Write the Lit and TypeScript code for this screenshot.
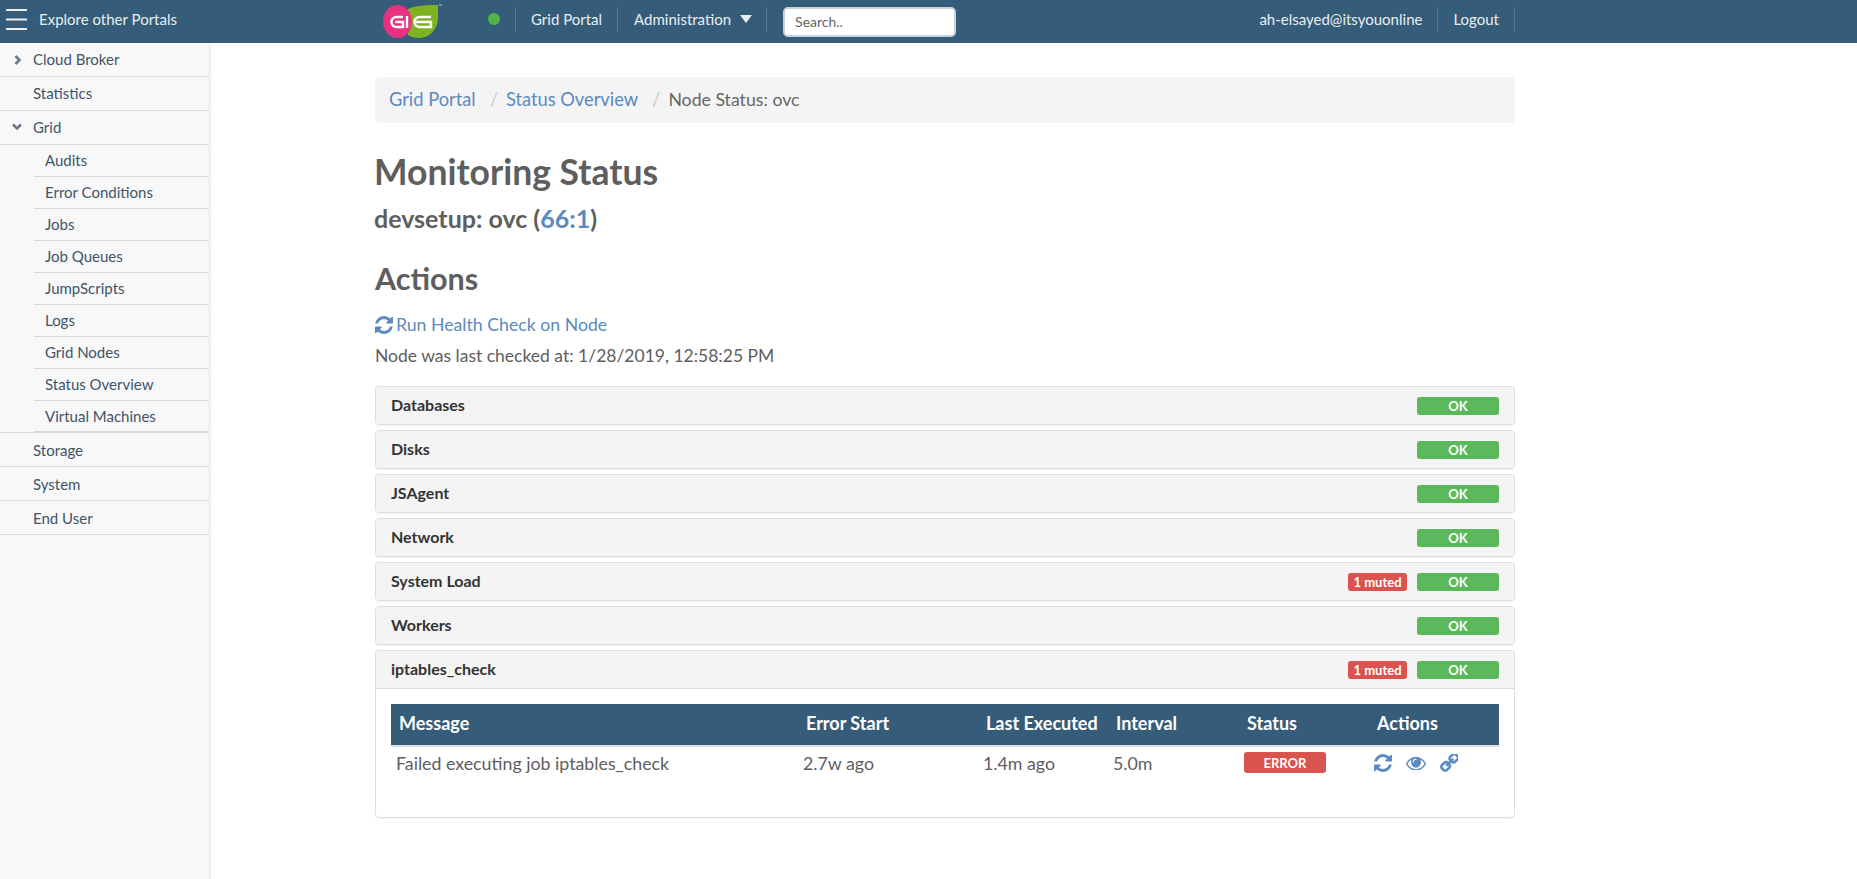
import { LitElement, html, css, svg } from 'lit';
import { customElement } from 'lit/decorators.js';

const refreshIcon = svg`<svg width="18" height="18" viewBox="0 128 1536 1536" fill="currentColor"><path d="M1511 1056q0 5-1 7-64 268-268 434.500t-478 166.500q-146 0-282.500-55t-243.500-157l-129 129q-19 19-45 19t-45-19-19-45v-448q0-26 19-45t45-19h448q26 0 45 19t19 45-19 45l-137 137q71 66 161 102t187 36q134 0 250-65t186-179q11-17 53-117 8-23 30-23h192q13 0 22.500 9.500t9.500 22.500zm25-800v448q0 26-19 45t-45 19h-448q-26 0-45-19t-19-45 19-45l138-138q-148-137-349-137-134 0-250 65t-186 179q-11 17-53 117-8 23-30 23h-199q-13 0-22.500-9.500t-9.500-22.500v-7q65-268 270-434.500t480-166.500q146 0 284 55.500t245 156.500l130-129q19-19 45-19t45 19 19 45z"/></svg>`;
const eyeIcon = svg`<svg width="20" height="14" viewBox="0 320 1792 1152" fill="currentColor" preserveAspectRatio="none"><path d="M1664 960q-152-236-381-353 61 104 61 225 0 185-131.500 316.500t-316.500 131.500-316.500-131.500-131.500-316.500q0-121 61-225-229 117-381 353 133 205 333.500 326.500t434.500 121.500 434.500-121.500 333.500-326.500zm-720-384q0-20-14-34t-34-14q-125 0-214.500 89.500t-89.500 214.500q0 20 14 34t34 14 34-14 14-34q0-86 61-147t147-61q20 0 34-14t14-34zm848 384q0 34-20 69-140 230-376.500 368.500t-499.500 138.500-499.500-139-376.500-368q-20-35-20-69t20-69q140-229 376.500-368t499.500-139 499.500 139 376.500 368q20 35 20 69z"/></svg>`;
const linkIcon = svg`<svg class="flip" width="18" height="18" viewBox="128 128 1536 1536" fill="currentColor" stroke="currentColor" stroke-width="40"><path d="M1456 1216q0-40-28-68l-208-208q-28-28-68-28-42 0-72 32 3 3 19 18.500t21.500 21.500 15 19 13 25.500 3.500 27.500q0 40-28 68t-68 28q-15 0-27.500-3.500t-25.500-13-19-15-21.500-21.500-18.500-19q-33 31-33 73 0 40 28 68l206 207q27 27 68 27 40 0 68-26l147-146q28-28 28-67zm-703-705q0-40-28-68l-206-207q-28-28-68-28-39 0-68 27l-147 146q-28 28-28 67 0 40 28 68l208 208q27 27 68 27 42 0 72-31-3-3-19-18.500t-21.500-21.500-15-19-13-25.500-3.500-27.500q0-40 28-68t68-28q15 0 27.500 3.500t25.500 13 19 15 21.500 21.500 18.500 19q33-31 33-73zm895 705q0 120-85 203l-147 146q-83 83-203 83-121 0-204-85l-206-207q-83-83-83-203 0-123 88-209l-88-88q-86 88-208 88-120 0-204-84l-208-208q-84-84-84-204t85-203l147-146q83-83 203-83 121 0 204 85l206 207q83 83 83 203 0 123-88 209l88 88q86-88 208-88 120 0 204 84l208 208q84 84 84 204z"/></svg>`;

const sidebarSub = ['Audits', 'Error Conditions', 'Jobs', 'Job Queues', 'JumpScripts', 'Logs', 'Grid Nodes', 'Status Overview', 'Virtual Machines'];
const panels = [
  { name: 'Databases' },
  { name: 'Disks' },
  { name: 'JSAgent' },
  { name: 'Network' },
  { name: 'System Load', muted: true },
  { name: 'Workers' },
];

@customElement('app-root')
export class AppRoot extends LitElement {
  static styles = css`
    :host {
      display: block;
      height: 879px;
      overflow: hidden;
      background: #fff;
      color: #5e5e5e;
      font-family: Lato, 'Open Sans', sans-serif;
      font-size: 16px;
    }
    a { color: #5c8ac0; text-decoration: none; }
    svg { display: block; }
    .flip { transform: scaleX(-1); }

    .navbar {
      display: flex;
      align-items: center;
      height: 43px;
      box-sizing: border-box;
      padding-bottom: 5px;
      background: #355c78;
      color: #e8eef2;
      font-size: 15px;
    }
    .brand {
      display: flex;
      align-items: center;
      width: 210px;
      flex: none;
    }
    .burger { margin: 0 12px 0 6px; flex: none; }
    .logo { margin: 3px 0 0 173px; flex: none; }
    .dot {
      width: 12px;
      height: 12px;
      border-radius: 50%;
      background: #4cb748;
      margin: 0 15px 0 46px;
      flex: none;
    }
    .nav-item {
      display: flex;
      align-items: center;
      height: 25px;
      border-left: 1px solid #5b7a90;
      padding: 0 15px;
      white-space: nowrap;
    }
    .nav-item.admin { padding: 0 14px 0 16px; }
    .nav-item.divider { padding: 0 16px 0 0; }
    .caret {
      width: 0;
      height: 0;
      border-left: 6px solid transparent;
      border-right: 6px solid transparent;
      border-top: 8px solid #e8eef2;
      margin-left: 9px;
    }
    .search {
      width: 173px;
      height: 30px;
      box-sizing: border-box;
      background: #fff;
      border: 2px solid #c8d2da;
      border-radius: 5px;
      margin-top: 5px;
      padding-left: 10px;
      display: flex;
      align-items: center;
      color: #666;
      font-size: 14px;
    }
    .spacer { flex: 1; }
    .right { display: flex; margin-right: 342px; }
    .right .nav-item { border-left: none; border-right: 1px solid #5b7a90; }

    .body { display: flex; height: 836px; }
    .sidebar {
      width: 210px;
      flex: none;
      box-sizing: border-box;
      background: #f8f8f8;
      border-right: 1px solid #ececec;
      box-shadow: 1px 0 2px rgba(0, 0, 0, 0.06);
      color: #3f5468;
      font-size: 15px;
    }
    .item {
      display: flex;
      align-items: center;
      height: 34px;
      box-sizing: border-box;
      border-bottom: 1px solid #d5dbe1;
      padding-left: 33px;
      position: relative;
    }
    .item.top { padding-bottom: 2px; }
    .chev { position: absolute; top: 12px; }
    .chev.right-c { left: 14px; }
    .chev.down-c { left: 12px; }
    .subs { border-bottom: 1px solid #d5dbe1; }
    .sub {
      display: flex;
      align-items: center;
      height: 32px;
      box-sizing: border-box;
      margin-left: 34px;
      border-bottom: 1px solid #d5dbe1;
      padding: 0 0 1px 11px;
    }
    .sub:last-child { height: 31px; padding-bottom: 0; }

    .main { flex: 1; padding: 34px 0 0 165px; min-width: 0; }
    .content { width: 1140px; }
    .crumb {
      display: flex;
      align-items: center;
      height: 46px;
      box-sizing: border-box;
      padding: 0 0 2px 14px;
      background: #f4f4f4;
      border-radius: 4px;
      font-size: 18.300px;
    }
    .crumb .sep { color: #ccc; padding: 0 8px 0 14px; }
    .crumb .now { color: #666; font-size: 17.700px; }
    h1 { font-size: 35.500px; font-weight: 700; margin: 29px 0 0 -1px; line-height: 40px; color: #5e5e5e; }
    h2 { font-size: 25px; font-weight: 700; margin: 11px 0 0 -1px; line-height: 30px; color: #5e5e5e; }
    h3 { font-size: 30.500px; font-weight: 700; margin: 27px 0 0; line-height: 36px; color: #5e5e5e; }
    .run { display: flex; align-items: center; gap: 3px; margin-top: 17px; font-size: 17.700px; line-height: 24px; }
    .checked { font-size: 17.500px; line-height: 24px; margin: 7px 0 18px; }

    .panel {
      border: 1px solid #ddd;
      border-radius: 4px;
      margin-bottom: 5px;
      box-shadow: 0 1px 1px rgba(0, 0, 0, 0.05);
    }
    .head {
      display: flex;
      align-items: center;
      height: 37px;
      background: #f4f4f4;
      padding: 0 15px;
      color: #333;
      font-size: 16px;
      font-weight: 700;
      border-radius: 3px;
    }
    .panel.open .head { border-bottom: 1px solid #ddd; border-radius: 3px 3px 0 0; }
    .head .name { flex: 1; margin-top: -2px; }
    .badge {
      display: flex;
      align-items: center;
      justify-content: center;
      height: 18px;
      border-radius: 3px;
      color: #fff;
      font-size: 13px;
      font-weight: 700;
    }
    .muted { width: 59px; background: #d9534f; margin-right: 10px; }
    .ok { width: 82px; background: #5cb85c; }

    .table-wrap { padding: 15px 15px 33px; }
    table { width: 1108px; border-collapse: collapse; table-layout: fixed; }
    .c1 { width: 407px; }
    .c2 { width: 180px; }
    .c3, .c5 { width: 130px; }
    .c4 { width: 131px; }
    th {
      background: #355c78;
      color: #fff;
      font-size: 18px;
      font-weight: 700;
      text-align: left;
      height: 42px;
      box-sizing: border-box;
      padding: 0 8px 3px;
      border-bottom: 2px solid #d8dee3;
    }
    td { font-size: 17.800px; padding: 0 5px 6px; height: 38px; box-sizing: border-box; color: #5e5e5e; }
    .err { width: 82px; height: 21px; background: #d9534f; }
    .acts { display: flex; gap: 14px; color: #5c8ac0; align-items: center; }
  `;

  render() {
    return html`
      <div class="navbar">
        <div class="brand">
          <svg class="burger" width="21" height="21" viewBox="0 0 21 21" fill="#e8eef2">
            <rect y="0" width="21" height="2"/><rect y="9.500" width="21" height="2"/><rect y="19" width="21" height="2"/>
          </svg>
          <span>Explore other Portals</span>
        </div>
        <svg class="logo" width="59" height="34" viewBox="0 0 59 34">
          <path d="M24 6C31 1 45 1 55 1V13C55 25 47 34 36 34c-4 0-8-1-11-3z" fill="#7eb221"/>
          <rect x="56" y="0" width="3" height="2" fill="#7b9a6a"/>
          <ellipse cx="14.500" cy="17.500" rx="14.500" ry="16.500" fill="#e6327f"/>
          <g fill="none" stroke="#fff" stroke-width="2.400">
            <path d="M20 13h-6.500a5 5 0 0 0 0 10H20v-5h-8"/>
            <path d="M24 12v12"/>
            <path d="M48 13H36.500a5 5 0 0 0 0 10H48v-5H33"/>
          </g>
        </svg>
        <div class="dot"></div>
        <div class="nav-item">Grid Portal</div>
        <div class="nav-item admin">Administration<span class="caret"></span></div>
        <div class="nav-item divider"></div>
        <div class="search">Search..</div>
        <div class="spacer"></div>
        <div class="right">
          <div class="nav-item">ah-elsayed@itsyouonline</div>
          <div class="nav-item">Logout</div>
        </div>
      </div>
      <div class="body">
        <div class="sidebar">
          <div class="item top">
            <svg class="chev right-c" width="8" height="10" viewBox="0 0 8 10" fill="none" stroke="#6a7a8a" stroke-width="2.600"><path d="M1.500 1l4 4-4 4"/></svg>
            Cloud Broker
          </div>
          <div class="item top">Statistics</div>
          <div class="item top">
            <svg class="chev down-c" width="10" height="8" viewBox="0 0 10 8" fill="none" stroke="#6a7a8a" stroke-width="2.600"><path d="M1 1.500l4 4 4-4"/></svg>
            Grid
          </div>
          <div class="subs">
            ${sidebarSub.map((s) => html`<div class="sub">${s}</div>`)}
          </div>
          <div class="item">Storage</div>
          <div class="item">System</div>
          <div class="item">End User</div>
        </div>
        <div class="main">
          <div class="content">
            <div class="crumb">
              <a href="#">Grid Portal</a><span class="sep">/</span>
              <a href="#">Status Overview</a><span class="sep">/</span>
              <span class="now">Node Status: ovc</span>
            </div>
            <h1>Monitoring Status</h1>
            <h2>devsetup: ovc (<a href="#">66:1</a>)</h2>
            <h3>Actions</h3>
            <a class="run" href="#">
              ${refreshIcon}
              Run Health Check on Node
            </a>
            <div class="checked">Node was last checked at: 1/28/2019, 12:58:25 PM</div>
            ${panels.map(
              (p) => html`
                <div class="panel">
                  <div class="head">
                    <span class="name">${p.name}</span>
                    ${p.muted ? html`<span class="badge muted">1 muted</span>` : ''}
                    <span class="badge ok">OK</span>
                  </div>
                </div>
              `
            )}
            <div class="panel open">
              <div class="head">
                <span class="name">iptables_check</span>
                <span class="badge muted">1 muted</span>
                <span class="badge ok">OK</span>
              </div>
              <div class="table-wrap">
                <table>
                  <colgroup><col class="c1"/><col class="c2"/><col class="c3"/><col class="c4"/><col class="c5"/><col/></colgroup>
                  <thead><tr><th>Message</th><th>Error Start</th><th>Last Executed</th><th>Interval</th><th>Status</th><th>Actions</th></tr></thead>
                  <tbody>
                    <tr>
                      <td>Failed executing job iptables_check</td>
                      <td>2.7w ago</td>
                      <td>1.4m ago</td>
                      <td>5.0m</td>
                      <td><span class="badge err">ERROR</span></td>
                      <td>
                        <div class="acts">${refreshIcon}${eyeIcon}${linkIcon}</div>
                      </td>
                    </tr>
                  </tbody>
                </table>
              </div>
            </div>
          </div>
        </div>
      </div>
    `;
  }
}
